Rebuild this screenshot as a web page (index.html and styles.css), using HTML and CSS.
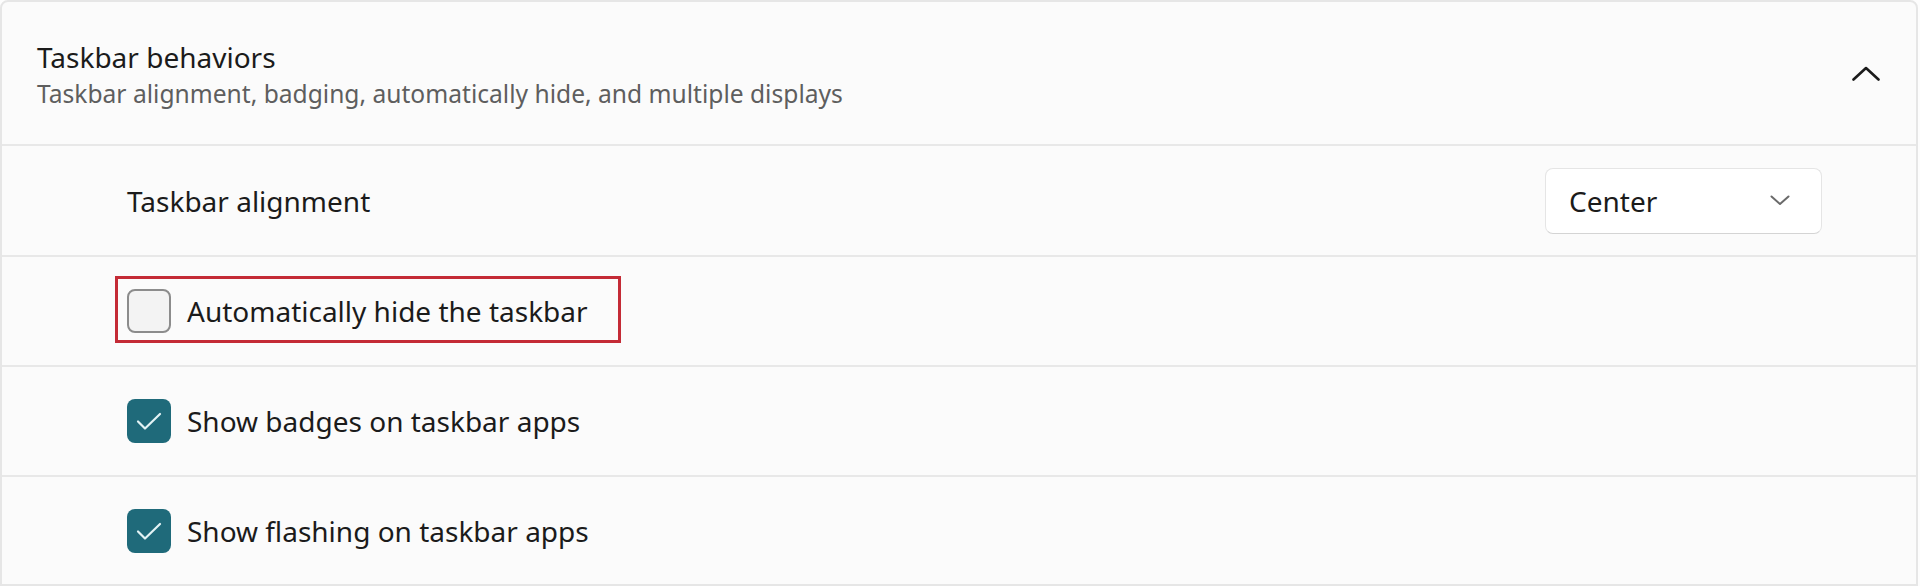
FILE: index.html
```html
<!DOCTYPE html>
<html lang="en">
<head>
    <meta charset="UTF-8">
    <meta name="viewport" content="width=device-width, initial-scale=1.0">
    <title>Taskbar behaviors</title>
    <link rel="stylesheet" href="styles.css">
</head>
<body>

<div class="expander">
    <div class="expander-header">
        <div class="header-text">
            <div class="header-title">Taskbar behaviors</div>
            <div class="header-desc">Taskbar alignment, badging, automatically hide, and multiple displays</div>
        </div>
        <svg class="chevron-up" width="28" height="15" viewBox="0 0 28 15">
            <path d="M1.5 13.5 L14 2 L26.5 13.5" fill="none" stroke="#1b1b1b" stroke-width="2.6" stroke-linecap="round" stroke-linejoin="round"/>
        </svg>
    </div>

    <div class="setting-row">
        <span class="setting-label">Taskbar alignment</span>
        <div class="combo">
            <span>Center</span>
            <svg width="20" height="11" viewBox="0 0 20 11">
                <path d="M1.5 1.5 L10 9 L18.5 1.5" fill="none" stroke="#6a6a6a" stroke-width="2" stroke-linecap="round" stroke-linejoin="round"/>
            </svg>
        </div>
    </div>

    <div class="setting-row">
        <!-- red box is the annotation from the original capture -->
        <label class="check highlight">
            <span class="box"></span>
            <span class="setting-label">Automatically hide the taskbar</span>
        </label>
    </div>

    <div class="setting-row">
        <label class="check">
            <span class="box checked">
                <svg width="44" height="44" viewBox="0 0 44 44">
                    <path d="M11 22.5 L18 29.5 L33 15" fill="none" stroke="#e3f3f5" stroke-width="2.2" stroke-linecap="round" stroke-linejoin="round"/>
                </svg>
            </span>
            <span class="setting-label">Show badges on taskbar apps</span>
        </label>
    </div>

    <div class="setting-row">
        <label class="check">
            <span class="box checked">
                <svg width="44" height="44" viewBox="0 0 44 44">
                    <path d="M11 22.5 L18 29.5 L33 15" fill="none" stroke="#e3f3f5" stroke-width="2.2" stroke-linecap="round" stroke-linejoin="round"/>
                </svg>
            </span>
            <span class="setting-label">Show flashing on taskbar apps</span>
        </label>
    </div>
</div>

</body>
</html>
```

FILE: styles.css
```css
body {
    font-family: 'Noto Sans', 'Open Sans', sans-serif;
    margin: 0;
    padding: 0;
    background-color: #fdfdfd;
    color: #1b1b1b;
}
.expander {
    width: 1918px;
    box-sizing: border-box;
    border: 2px solid #e6e6e6;
    border-radius: 8px 8px 0 0;
    background-color: #fbfbfb;
}
.expander-header {
    height: 142px;
    display: flex;
    align-items: center;
    justify-content: space-between;
    padding: 0 36px 0 35px;
}
.header-text {
    display: flex;
    flex-direction: column;
    margin-top: 2px;
}
.header-title {
    font-size: 28px;
    line-height: 40px;
}
.header-desc {
    font-size: 24.6px;
    line-height: 34px;
    color: #5e5e5e;
}
.setting-row {
    height: 108px;
    border-top: 2px solid #e8e8e8;
    display: flex;
    align-items: center;
    justify-content: space-between;
    padding: 0 94px 0 125px;
}
.setting-row:nth-child(2) {
    height: 109px;
}
.setting-row:last-child {
    height: 107px;
}
.setting-label {
    font-size: 28px;
    line-height: 40px;
}
.combo {
    width: 277px;
    height: 66px;
    box-sizing: border-box;
    display: flex;
    align-items: center;
    justify-content: space-between;
    padding: 0 31px 0 23px;
    background-color: #fff;
    border: 1px solid #e5e5e5;
    border-bottom-color: #d4d4d4;
    border-radius: 8px;
}
.combo span {
    font-size: 28px;
    line-height: 40px;
}
.check {
    display: flex;
    align-items: center;
    gap: 16px;
}
.box {
    width: 44px;
    height: 44px;
    box-sizing: border-box;
    border: 2px solid #8c8c8c;
    border-radius: 8px;
    background-color: #f3f3f3;
    display: flex;
}
.box.checked {
    border: none;
    background-color: #1f6a7a;
}
.highlight {
    border: 3px solid #c42b36;
    padding: 10px 30px 7px 9px;
    margin-left: -12px;
    margin-top: -4px;
}
```
